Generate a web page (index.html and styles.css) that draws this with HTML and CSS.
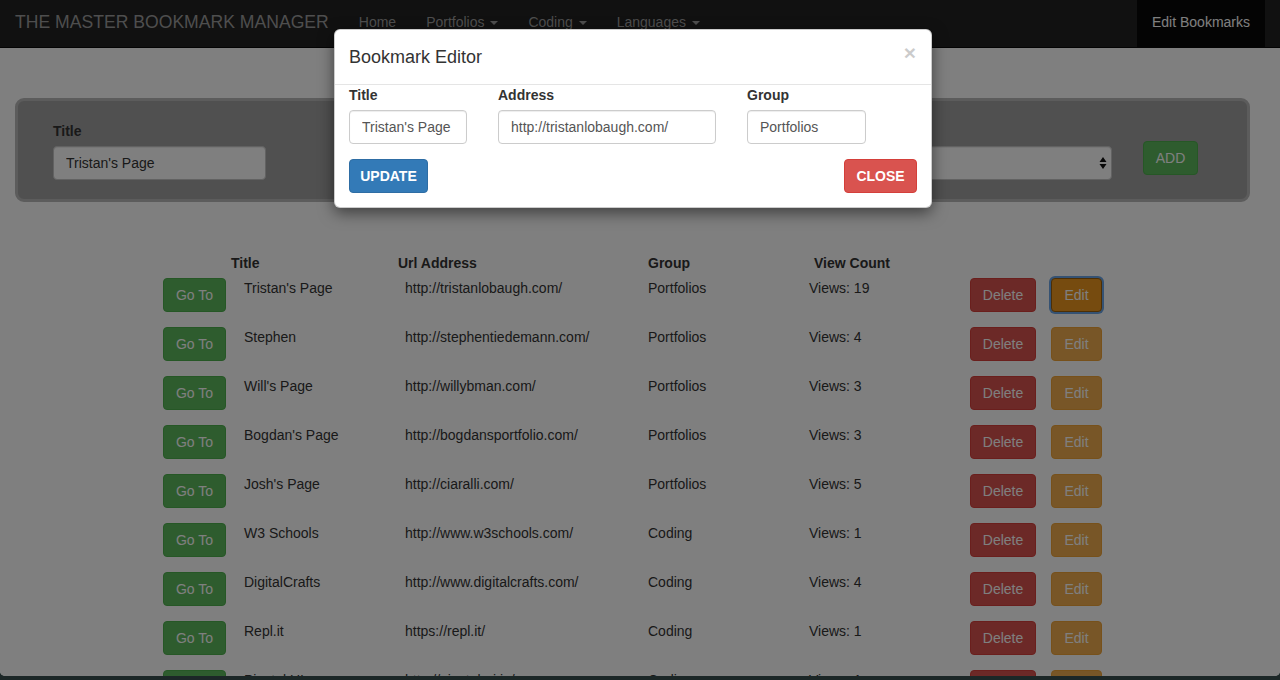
FILE: index.html
```html
<!DOCTYPE html>
<html lang="en">
<head>
<meta charset="utf-8">
<title>The Master Bookmark Manager</title>
<link rel="stylesheet" href="styles.css">
</head>
<body>
<div class="window">
  <nav class="navbar">
    <a class="brand" href="#">THE MASTER BOOKMARK MANAGER</a>
    <ul class="nav">
      <li><a href="#">Home</a></li>
      <li><a href="#">Portfolios <span class="caret"></span></a></li>
      <li><a href="#">Coding <span class="caret"></span></a></li>
      <li><a href="#">Languages <span class="caret"></span></a></li>
    </ul>
    <ul class="nav nav-right">
      <li class="active"><a href="#">Edit Bookmarks</a></li>
    </ul>
  </nav>

  <main class="content">
    <form class="add-panel">
      <div class="field title-field">
        <label>Title</label>
        <input class="form-control" type="text" value="Tristan's Page">
      </div>
      <div class="field address-field">
        <label>Address</label>
        <input class="form-control" type="text" value="http://tristanlobaugh.com/">
      </div>
      <div class="field group-field">
        <label>Group</label>
        <div class="form-control select">
          <span>Portfolios</span>
          <svg class="select-arrows" width="8" height="14" viewBox="0 0 8 14"><path d="M4 1 L7.5 6 L0.5 6 Z M0.5 8 L7.5 8 L4 13 Z" fill="#111"/></svg>
        </div>
      </div>
      <button class="btn btn-success add-btn" type="button">ADD</button>
    </form>

    <section class="bookmarks">
      <div class="thead">
        <span class="h-title">Title</span>
        <span class="h-url">Url Address</span>
        <span class="h-group">Group</span>
        <span class="h-views">View Count</span>
      </div>
      <div class="row">
        <button class="btn btn-success go" type="button">Go To</button>
        <span>Tristan's Page</span><span>http://tristanlobaugh.com/</span><span>Portfolios</span><span>Views: 19</span>
        <button class="btn btn-danger del" type="button">Delete</button>
        <button class="btn btn-warning edit focused" type="button">Edit</button>
      </div>
      <div class="row">
        <button class="btn btn-success go" type="button">Go To</button>
        <span>Stephen</span><span>http://stephentiedemann.com/</span><span>Portfolios</span><span>Views: 4</span>
        <button class="btn btn-danger del" type="button">Delete</button>
        <button class="btn btn-warning edit" type="button">Edit</button>
      </div>
      <div class="row">
        <button class="btn btn-success go" type="button">Go To</button>
        <span>Will's Page</span><span>http://willybman.com/</span><span>Portfolios</span><span>Views: 3</span>
        <button class="btn btn-danger del" type="button">Delete</button>
        <button class="btn btn-warning edit" type="button">Edit</button>
      </div>
      <div class="row">
        <button class="btn btn-success go" type="button">Go To</button>
        <span>Bogdan's Page</span><span>http://bogdansportfolio.com/</span><span>Portfolios</span><span>Views: 3</span>
        <button class="btn btn-danger del" type="button">Delete</button>
        <button class="btn btn-warning edit" type="button">Edit</button>
      </div>
      <div class="row">
        <button class="btn btn-success go" type="button">Go To</button>
        <span>Josh's Page</span><span>http://ciaralli.com/</span><span>Portfolios</span><span>Views: 5</span>
        <button class="btn btn-danger del" type="button">Delete</button>
        <button class="btn btn-warning edit" type="button">Edit</button>
      </div>
      <div class="row">
        <button class="btn btn-success go" type="button">Go To</button>
        <span>W3 Schools</span><span>http://www.w3schools.com/</span><span>Coding</span><span>Views: 1</span>
        <button class="btn btn-danger del" type="button">Delete</button>
        <button class="btn btn-warning edit" type="button">Edit</button>
      </div>
      <div class="row">
        <button class="btn btn-success go" type="button">Go To</button>
        <span>DigitalCrafts</span><span>http://www.digitalcrafts.com/</span><span>Coding</span><span>Views: 4</span>
        <button class="btn btn-danger del" type="button">Delete</button>
        <button class="btn btn-warning edit" type="button">Edit</button>
      </div>
      <div class="row">
        <button class="btn btn-success go" type="button">Go To</button>
        <span>Repl.it</span><span>https://repl.it/</span><span>Coding</span><span>Views: 1</span>
        <button class="btn btn-danger del" type="button">Delete</button>
        <button class="btn btn-warning edit" type="button">Edit</button>
      </div>
      <div class="row">
        <button class="btn btn-success go" type="button">Go To</button>
        <span>Pivotal UI</span><span>http://pivotal-ui.io/</span><span>Coding</span><span>Views: 1</span>
        <button class="btn btn-danger del" type="button">Delete</button>
        <button class="btn btn-warning edit" type="button">Edit</button>
      </div>
    </section>
  </main>

  <div class="backdrop"></div>

  <div class="modal">
    <div class="modal-header">
      <button class="close" type="button">&times;</button>
      <h4 class="modal-title">Bookmark Editor</h4>
    </div>
    <div class="modal-body">
      <div class="modal-fields">
        <div class="field m-title">
          <label>Title</label>
          <input class="form-control" type="text" value="Tristan's Page">
        </div>
        <div class="field m-address">
          <label>Address</label>
          <input class="form-control" type="text" value="http://tristanlobaugh.com/">
        </div>
        <div class="field m-group">
          <label>Group</label>
          <input class="form-control" type="text" value="Portfolios">
        </div>
      </div>
      <div class="modal-actions">
        <button class="btn btn-primary strong update" type="button">UPDATE</button>
        <button class="btn btn-danger strong closebtn" type="button">CLOSE</button>
      </div>
    </div>
  </div>
</div>
</body>
</html>
```

FILE: styles.css
```css
* { box-sizing: border-box; }

html {
  background: #1c2727;
  height: 100%;
}

body {
  margin: 0;
  font-family: "Liberation Sans", Arial, sans-serif;
  font-size: 14px;
  line-height: 20px;
  color: #333;
}

.window {
  position: relative;
  height: 676px;
  overflow: hidden;
  background: #fff;
  border-radius: 0 0 5px 5px;
}

/* navbar */
.navbar {
  display: flex;
  align-items: stretch;
  height: 48px;
  background: #222;
  border-bottom: 1px solid #080808;
}
.brand {
  padding: 12px 15px;
  font-size: 17.6px;
  line-height: 20px;
  color: #9d9d9d;
  text-decoration: none;
}
.nav {
  display: flex;
  list-style: none;
  margin: 0;
  padding: 0;
}
.nav li a {
  display: block;
  height: 100%;
  padding: 12px 15px;
  line-height: 21px;
  color: #9d9d9d;
  text-decoration: none;
}
.nav-right {
  margin-left: auto;
  margin-right: 15px;
}
.nav .active a {
  background: #080808;
  color: #fff;
}
.caret {
  display: inline-block;
  width: 0;
  height: 0;
  margin-left: 2px;
  vertical-align: middle;
  border-top: 4px solid;
  border-left: 4px solid transparent;
  border-right: 4px solid transparent;
}

/* content */
.content {
  padding-left: 15px;
}

.add-panel {
  display: flex;
  align-items: flex-start;
  width: 1235px;
  margin-top: 50px;
  padding: 20px 0 19px 35px;
  background: #a0a0a0;
  border: 3px solid #b8b8b8;
  border-radius: 9px;
}
.field {
  display: flex;
  flex-direction: column;
}
.field label {
  font-weight: bold;
  line-height: 20px;
  margin-bottom: 5px;
}
.title-field { width: 213px; }
.address-field { width: 213px; margin-left: 150px; }
.group-field { width: 423px; margin-left: 60px; }

.form-control {
  display: block;
  width: 100%;
  height: 34px;
  padding: 6px 12px;
  font-family: inherit;
  font-size: 14px;
  line-height: 20px;
  color: #555;
  background: #fff;
  border: 1px solid #ccc;
  border-radius: 4px;
  box-shadow: inset 0 1px 1px rgba(0,0,0,.075);
}
.add-panel .form-control {
  border-color: #c4c4c4;
  color: #333;
}
.select {
  display: flex;
  align-items: center;
  justify-content: space-between;
  padding-right: 4px;
}
.select-arrows { display: block; }

.btn {
  display: inline-block;
  height: 34px;
  padding: 6px 12px;
  font-family: inherit;
  font-size: 14px;
  line-height: 20px;
  text-align: center;
  color: #fff;
  border: 1px solid transparent;
  border-radius: 4px;
  white-space: nowrap;
}
.btn-success { background: #5cb85c; border-color: #4cae4c; }
.btn-danger { background: #d9534f; border-color: #d43f3a; }
.btn-warning { background: #f0ad4e; border-color: #eea236; }
.btn-primary { background: #337ab7; border-color: #2e6da4; }
.strong { font-weight: bold; }

.add-btn {
  margin-left: 31px;
  margin-top: 20px;
  width: 55px;
  padding: 6px 0;
}

/* bookmarks list */
.bookmarks {
  margin-top: 51px;
  margin-left: 148px;
  color: #333;
}
.thead {
  display: grid;
  grid-template-columns: 68px 167px 250px 166px auto;
  font-weight: bold;
  line-height: 20px;
  margin-bottom: 5px;
}
.h-title { grid-column: 2; }
.h-url { grid-column: 3; }
.h-group { grid-column: 4; }
.h-views { grid-column: 5; }

.row {
  display: grid;
  grid-template-columns: 81px 161px 243px 161px 161px 81px 51px;
  align-items: start;
  margin-bottom: 15px;
}
.row span { line-height: 20px; }
.go { width: 63px; padding: 6px 0; }
.del { width: 66px; padding: 6px 0; }
.edit { width: 51px; padding: 6px 0; }
.edit.focused {
  background: #ec971f;
  border-color: #985f0d;
  box-shadow: 0 0 0 2px #6aa5e6;
}

/* modal */
.backdrop {
  position: absolute;
  inset: 0;
  background: rgba(0,0,0,.5);
}
.modal {
  position: absolute;
  top: 29px;
  left: 334px;
  width: 598px;
  background: #fff;
  border: 1px solid rgba(0,0,0,.2);
  border-radius: 6px;
  box-shadow: 0 5px 15px rgba(0,0,0,.5);
}
.modal-header {
  padding: 15px 15px 15px 14px;
  border-bottom: 1px solid #e5e5e5;
}
.modal-title {
  margin: 0;
  font-size: 18px;
  line-height: 24px;
  font-weight: normal;
  color: #333;
}
.close {
  float: right;
  margin-top: -4px;
  padding: 0;
  font-family: inherit;
  font-size: 21px;
  font-weight: bold;
  line-height: 24px;
  color: #000;
  opacity: .2;
  background: transparent;
  border: 0;
}
.modal-body {
  padding: 0 14px 14px;
}
.modal-fields {
  display: flex;
}
.m-title { width: 118px; margin-right: 31px; }
.m-address { width: 218px; margin-right: 31px; }
.m-group { width: 119px; }
.modal-actions {
  display: flex;
  justify-content: space-between;
  margin-top: 15px;
}
.update { width: 79px; padding: 6px 0; }
.closebtn { width: 73px; padding: 6px 0; }
```
